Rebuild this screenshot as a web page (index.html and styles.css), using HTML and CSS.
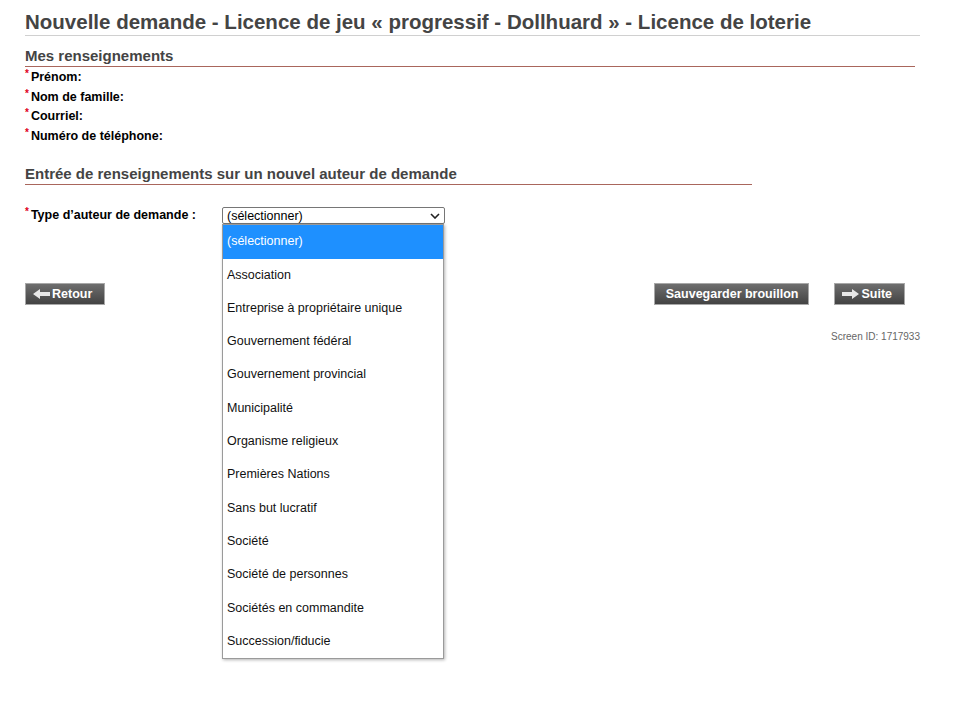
FILE: index.html
```html
<!DOCTYPE html>
<html lang="fr">
<head>
    <meta charset="UTF-8">
    <meta name="viewport" content="width=device-width, initial-scale=1.0">
    <title>Nouvelle demande</title>
    <link rel="stylesheet" href="styles.css">
</head>
<body>
    <div class="page">
        <h1 class="page-title">Nouvelle demande - Licence de jeu « progressif - Dollhuard » - Licence de loterie</h1>

        <div class="section section-info">
            <h2 class="section-title">Mes renseignements</h2>
            <div class="field"><span class="req">*</span>Prénom:</div>
            <div class="field"><span class="req">*</span>Nom de famille:</div>
            <div class="field"><span class="req">*</span>Courriel:</div>
            <div class="field"><span class="req">*</span>Numéro de téléphone:</div>
        </div>

        <div class="section section-author">
            <h2 class="section-title">Entrée de renseignements sur un nouvel auteur de demande</h2>
            <div class="select-row">
                <label class="field select-label"><span class="req">*</span>Type d’auteur de demande :</label>
                <div class="select-wrap">
                    <div class="select-box">
                        <span>(sélectionner)</span>
                        <svg class="chevron" width="10" height="6" viewBox="0 0 10 6"><path d="M1 1 L5 5 L9 1" fill="none" stroke="#222" stroke-width="1.6"/></svg>
                    </div>
                    <!-- liste ouverte du menu déroulant -->
                    <ul class="select-list">
                        <li class="active">(sélectionner)</li>
                        <li>Association</li>
                        <li>Entreprise à propriétaire unique</li>
                        <li>Gouvernement fédéral</li>
                        <li>Gouvernement provincial</li>
                        <li>Municipalité</li>
                        <li>Organisme religieux</li>
                        <li>Premières Nations</li>
                        <li>Sans but lucratif</li>
                        <li>Société</li>
                        <li>Société de personnes</li>
                        <li>Sociétés en commandite</li>
                        <li>Succession/fiducie</li>
                    </ul>
                </div>
            </div>
        </div>

        <div class="actions">
            <button class="btn btn-icon">
                <svg width="17" height="10" viewBox="0 0 17 10"><path d="M0 5 L7 0 L7 3 L17 3 L17 7 L7 7 L7 10 Z" fill="#e8e8e8"/></svg>
                Retour
            </button>
            <div class="actions-right">
                <button class="btn">Sauvegarder brouillon</button>
                <button class="btn btn-icon">
                    <svg width="17" height="10" viewBox="0 0 17 10"><path d="M17 5 L10 0 L10 3 L0 3 L0 7 L10 7 L10 10 Z" fill="#e8e8e8"/></svg>
                    Suite
                </button>
            </div>
        </div>

        <div class="screen-id">Screen ID: 1717933</div>
    </div>
</body>
</html>
```

FILE: styles.css
```css
* {
    margin: 0;
    padding: 0;
    box-sizing: border-box;
}

html, body {
    min-height: 100%;
}

body {
    font-family: 'Liberation Sans', Arial, sans-serif;
    background: white;
    color: #000;
}

.page {
    width: 920px;
    min-height: 700px;
    padding: 10px 0 0 25px;
}

.page-title {
    font-size: 20.5px;
    font-weight: bold;
    color: #444;
    line-height: 23px;
    padding-bottom: 2px;
    border-bottom: 1px solid #d0d0d0;
    white-space: nowrap;
}

.section-title {
    font-size: 15px;
    font-weight: bold;
    color: #444;
    line-height: 18px;
    padding-bottom: 1px;
    border-bottom: 1px solid #a9665c;
    margin-bottom: 1px;
}

.section-info {
    margin-top: 11px;
    width: 890px;
}

.section-author {
    margin-top: 19px;
    width: 727px;
}

.field {
    font-size: 12.5px;
    font-weight: bold;
    line-height: 19.5px;
    color: #000;
}

.req {
    color: #e0001b;
    font-size: 10px;
    line-height: 0;
    vertical-align: 4px;
    margin-right: 2px;
}

.select-row {
    display: flex;
    align-items: center;
    margin-top: 21px;
}

.select-label {
    width: 197px;
}

.select-wrap {
    position: relative;
}

.select-box {
    width: 223px;
    height: 17px;
    border: 1px solid #767676;
    border-radius: 2px;
    display: flex;
    align-items: center;
    justify-content: space-between;
    padding: 0 4px;
    font-size: 12.5px;
    color: #000;
    background: white;
}

.chevron {
    margin-top: 1px;
}

.select-list {
    position: absolute;
    top: 17px;
    left: 0;
    width: 222px;
    list-style: none;
    background: white;
    border: 1px solid #9a9a9a;
    box-shadow: 1px 1px 3px rgba(0, 0, 0, 0.3);
    z-index: 10;
}

.select-list li {
    height: 33.3px;
    line-height: 33.3px;
    padding-left: 4px;
    font-size: 12.5px;
    color: #111;
    white-space: nowrap;
}

.select-list li.active {
    background: #1e90ff;
    color: white;
}

.actions {
    display: flex;
    justify-content: space-between;
    margin-top: 57px;
    width: 880px;
}

.actions-right {
    display: flex;
    gap: 25px;
}

.btn {
    display: flex;
    align-items: center;
    gap: 2px;
    height: 22px;
    padding: 0 10px 0 11px;
    font-family: 'Liberation Sans', Arial, sans-serif;
    font-size: 12.5px;
    font-weight: bold;
    color: white;
    background: linear-gradient(#6e6e6e, #434343);
    border: 1px solid #a8a8a8;
    cursor: pointer;
}

.btn-icon {
    padding: 0 12px 0 7px;
}

.screen-id {
    text-align: right;
    font-size: 10px;
    color: #666;
    margin-top: 26px;
    width: 895px;
}
```
